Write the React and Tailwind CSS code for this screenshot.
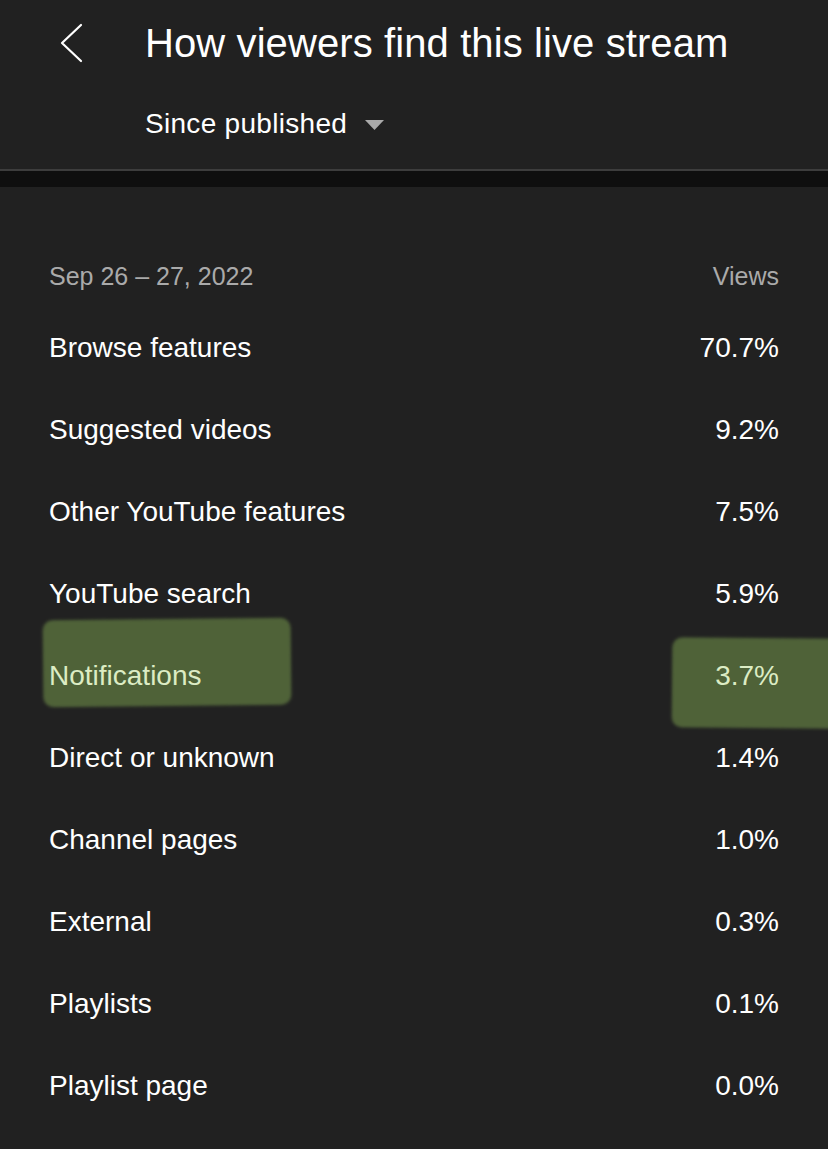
import React from 'react';

const sources = [
  { name: 'Browse features', value: '70.7%' },
  { name: 'Suggested videos', value: '9.2%' },
  { name: 'Other YouTube features', value: '7.5%' },
  { name: 'YouTube search', value: '5.9%' },
  { name: 'Notifications', value: '3.7%', marked: true },
  { name: 'Direct or unknown', value: '1.4%' },
  { name: 'Channel pages', value: '1.0%' },
  { name: 'External', value: '0.3%' },
  { name: 'Playlists', value: '0.1%' },
  { name: 'Playlist page', value: '0.0%' },
];

export default function App() {
  return (
    <div className="relative min-h-[1149px] bg-[#212121] text-white font-['Liberation_Sans',Arial,sans-serif] overflow-hidden">
      {/* Header */}
      <div className="h-[169px]">
        <div className="flex items-center h-[86px]">
          <button className="w-[145px] h-full flex items-center pl-[58px]">
            <svg width="26" height="40" viewBox="0 0 26 40" fill="none">
              <path d="M23 2 L4 20 L23 38" stroke="#ffffff" strokeWidth="2.2" strokeLinecap="round" strokeLinejoin="round" />
            </svg>
          </button>
          <h1 className="text-[40px] leading-none tracking-[0.1px]">How viewers find this live stream</h1>
        </div>
        <div className="flex items-center pl-[145px] h-[76px]">
          <span className="text-[28px] leading-none tracking-[0.3px]">Since published</span>
          <svg className="ml-[18px] mt-[1px]" width="19" height="10" viewBox="0 0 19 10">
            <path d="M0 0 L19 0 L9.5 10 Z" fill="#aaaaaa" />
          </svg>
        </div>
      </div>
      <div className="h-[2px] bg-[#3d3d3d]" />
      <div className="h-[16px] bg-[#0f0f0f]" />

      {/* Table */}
      <div className="px-[49px] pt-[60px]">
        <div className="flex justify-between items-center h-[60px] text-[25px] text-[#aaaaaa]">
          <span>Sep 26 – 27, 2022</span>
          <span>Views</span>
        </div>
        {sources.map(s => (
          <div key={s.name} className="relative flex justify-between items-center h-[82px] text-[28px]">
            {s.marked && (
              <>
                <div className="absolute left-[-6px] top-[-16px] w-[248px] h-[87px] bg-[#4f6238] rounded-[10px] blur-[1.5px] -rotate-[0.6deg]" />
                <div className="absolute right-[-60px] top-[3px] w-[167px] h-[90px] bg-[#4f6238] rounded-l-[10px] blur-[1.5px] rotate-[0.5deg]" />
              </>
            )}
            <span className={`relative ${s.marked ? 'text-[#dcecc4]' : ''}`}>{s.name}</span>
            <span className={`relative ${s.marked ? 'text-[#dcecc4]' : ''}`}>{s.value}</span>
          </div>
        ))}
      </div>
    </div>
  );
}
